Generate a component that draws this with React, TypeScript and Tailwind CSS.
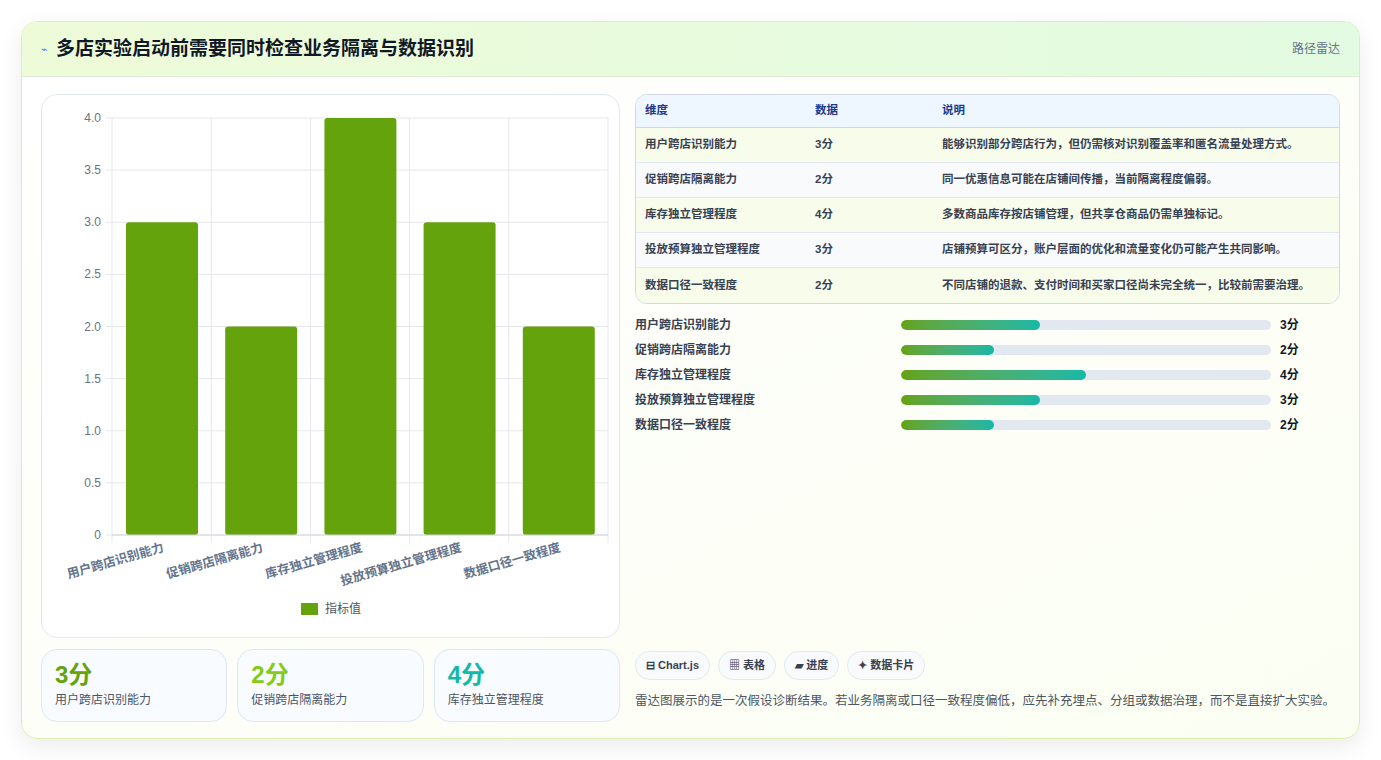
import React from "react";

const dims = [
  { n: "用户跨店识别能力", v: 3, d: "能够识别部分跨店行为，但仍需核对识别覆盖率和匿名流量处理方式。" },
  { n: "促销跨店隔离能力", v: 2, d: "同一优惠信息可能在店铺间传播，当前隔离程度偏弱。" },
  { n: "库存独立管理程度", v: 4, d: "多数商品库存按店铺管理，但共享仓商品仍需单独标记。" },
  { n: "投放预算独立管理程度", v: 3, d: "店铺预算可区分，账户层面的优化和流量变化仍可能产生共同影响。" },
  { n: "数据口径一致程度", v: 2, d: "不同店铺的退款、支付时间和买家口径尚未完全统一，比较前需要治理。" },
];

function Chart() {
  const x0 = 70, x1 = 566, y0 = 23, y1 = 440;
  const h = y1 - y0;
  const step = (x1 - x0) / 5;
  const ticks = [0, 0.5, 1, 1.5, 2, 2.5, 3, 3.5, 4];
  return (
    <svg width="579" height="543" viewBox="0 0 579 543" style={{ fontFamily: "'Liberation Sans','Noto Sans CJK SC',sans-serif" }}>
      {ticks.map((t) => {
        const y = y1 - (t / 4) * h;
        return (
          <g key={t}>
            <line x1={x0 - 6} x2={x1} y1={y} y2={y} stroke="#e5e7eb" />
            <text x={x0 - 11} y={y + 4} textAnchor="end" fontSize="12" fill="#6b7280">{t === 0 ? "0" : t.toFixed(1)}</text>
          </g>
        );
      })}
      {[0, 1, 2, 3, 4, 5].map((i) => (
        <line key={i} x1={x0 + i * step} x2={x0 + i * step} y1={y0} y2={y1 + 8} stroke="#e5e7eb" />
      ))}
      {dims.map((d, i) => {
        const bh = (d.v / 4) * h;
        const bx = x0 + i * step + 14;
        return <rect key={i} x={bx} y={y1 - bh} width={72} height={bh} rx={3} fill="#65a30d" />;
      })}
      <line x1={x0} x2={x1} y1={y1} y2={y1} stroke="#d1d5db" />
      {dims.map((d, i) => {
        const cx = x0 + i * step + step / 2 + 3;
        return (
          <text key={i} x={cx} y={y1 + 16} textAnchor="end" fontSize="12.5" fontWeight="bold" fill="#64748b" transform={`rotate(-16 ${cx} ${y1 + 16})`}>{d.n}</text>
        );
      })}
      <rect x={259} y={508} width={17} height={12} fill="#65a30d" />
      <text x={283} y={518} fontSize="12" fill="#4b5563">指标值</text>
    </svg>
  );
}

export default function App() {
  const font = { fontFamily: "'Liberation Sans','Noto Sans CJK SC',sans-serif" };
  return (
    <div className="w-[1381px] h-[760px] bg-white pt-[21px] px-[21px]" style={font}>
      <div className="w-[1339px] h-[718px] rounded-2xl border border-[#d9f0b0] shadow-[0_8px_24px_rgba(0,0,0,0.08)] overflow-hidden bg-gradient-to-br from-white to-[#fbfef2] flex flex-col">
        <div className="h-[55px] flex items-center justify-between px-[19px] border-b border-[#e0ecd8] bg-gradient-to-r from-[#eefbd9] to-[#e3fbe2]">
          <div className="flex items-center gap-2">
            <span className="text-[11px] text-[#3b82f6]">⌁</span>
            <span className="text-[19px] font-bold text-[#111827]">多店实验启动前需要同时检查业务隔离与数据识别</span>
          </div>
          <span className="text-[12px] text-[#64748b]">路径雷达</span>
        </div>
        <div className="flex gap-[15px] px-[19px] pt-[17px]">
          <div className="w-[579px] flex flex-col gap-[11px]">
            <div className="h-[544px] rounded-2xl border border-[#e2e8f0] bg-white overflow-hidden">
              <Chart />
            </div>
            <div className="grid grid-cols-3 gap-[10px]">
              {[["3分", "text-[#65a30d]", dims[0].n], ["2分", "text-[#84cc16]", dims[1].n], ["4分", "text-[#14b8a6]", dims[2].n]].map(([v, c, n]) => (
                <div key={n} className="h-[73px] rounded-2xl border border-[#dbe7f3] bg-[#f8fbff] px-[13px] pt-[10px]">
                  <div className={`text-[24px] font-bold leading-[30px] ${c}`}>{v}</div>
                  <div className="text-[12px] text-[#4b5563] mt-[1px]">{n}</div>
                </div>
              ))}
            </div>
          </div>
          <div className="w-[707px] flex flex-col">
            <div className="rounded-xl border border-[#cfd9e6] overflow-hidden text-[11.5px]">
              <div className="flex h-[33px] items-center bg-[#eef6ff] border-b border-[#cfd9e6] font-bold text-[#1e3a8a]">
                <div className="w-[170px] pl-[9px]">维度</div>
                <div className="w-[127px] pl-[9px]">数据</div>
                <div className="flex-1 pl-[9px]">说明</div>
              </div>
              {dims.map((d, i) => (
                <div key={i} className={`flex h-[35px] items-center font-bold text-[#374151] ${i % 2 === 0 ? "bg-[#f8fdeb]" : "bg-[#f8fafc]"} ${i < 4 ? "border-b border-[#e2e8f0]" : ""}`}>
                  <div className="w-[170px] pl-[9px]">{d.n}</div>
                  <div className="w-[127px] pl-[9px]">{d.v}分</div>
                  <div className="flex-1 pl-[9px]">{d.d}</div>
                </div>
              ))}
            </div>
            <div className="flex flex-col gap-[9px] mt-[13px]">
              {dims.map((d, i) => (
                <div key={i} className="flex items-center h-[16px] text-[12px]">
                  <div className="w-[266px] text-[#374151] font-bold">{d.n}</div>
                  <div className="w-[370px] h-[10px] rounded-full bg-[#e2e8f0] overflow-hidden">
                    <div className="h-full rounded-full bg-gradient-to-r from-[#65a30d] to-[#14b8a6]" style={{ width: `${(d.v / 8) * 100}%` }} />
                  </div>
                  <div className="ml-[9px] font-bold text-[#111827]">{d.v}分</div>
                </div>
              ))}
            </div>
            <div className="flex gap-[8px] mt-[218px]">
              {["⊟ Chart.js", "▦ 表格", "▰ 进度", "✦ 数据卡片"].map((t) => (
                <div key={t} className="h-[29px] px-[10px] flex items-center rounded-full border border-[#e2e8f0] bg-[#f8fafc] text-[11px] font-bold text-[#374151]">{t}</div>
              ))}
            </div>
            <p className="mt-[11px] text-[12.5px] leading-[20px] text-[#4b5563]">雷达图展示的是一次假设诊断结果。若业务隔离或口径一致程度偏低，应先补充埋点、分组或数据治理，而不是直接扩大实验。</p>
          </div>
        </div>
      </div>
    </div>
  );
}
